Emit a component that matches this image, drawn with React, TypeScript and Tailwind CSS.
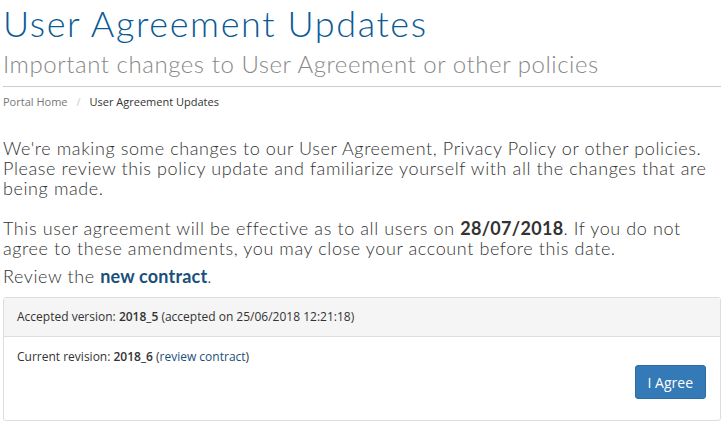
export default function App() {
  return (
    <div className="min-h-screen bg-white px-[3px] pr-[4px] font-['Lato',sans-serif] text-[#333]">
      {/* Page header */}
      <div className="border-b border-[#ccc] pb-[6px]">
        <h1 className="pt-[3px] text-[36px] font-light leading-[40px] tracking-[1.6px] text-[#0b5a94]">
          User Agreement Updates
        </h1>
        <h2 className="mt-[5px] text-[24px] font-light leading-[32px] tracking-[0.55px] text-[#888]">
          Important changes to User Agreement or other policies
        </h2>
      </div>

      {/* Breadcrumb */}
      <nav className="mt-[7px] flex items-center font-['Open_Sans',sans-serif] text-[11px] leading-[16px]">
        <span className="text-[#777]">Portal Home</span>
        <span className="px-[9px] text-[#ccc]">/</span>
        <span className="text-[#333]">User Agreement Updates</span>
      </nav>

      {/* Body text */}
      <div className="mt-[28px] text-[18px] font-light leading-[20px] tracking-[0.6px]">
        <p>
          We're making some changes to our User Agreement, Privacy Policy or other policies.
          Please review this policy update and familiarize yourself with all the changes that are
          being made.
        </p>
        <p className="mt-[20px]">
          This user agreement will be effective as to all users on{' '}
          <strong className="font-bold tracking-[0.3px]">28/07/2018</strong>. If you do not agree
          to these amendments, you may close your account before this date.
        </p>
        <p className="mt-[8px]">
          Review the <a className="font-bold tracking-[0.2px] text-[#1a4f7a]">new contract</a>.
        </p>
      </div>

      {/* Agreement panel */}
      <div className="mt-[11px] rounded-[3px] border border-[#ddd] font-['Open_Sans',sans-serif] text-[12px]">
        <div className="border-b border-[#ddd] bg-[#f5f5f5] px-[13px] py-[11px] leading-[16px]">
          Accepted version: <b className="font-semibold">2018_5</b> (accepted on 25/06/2018 12:21:18)
        </div>
        <div className="px-[13px] pt-[11px] pb-[21px] leading-[17px]">
          <div>
            Current revision: <b className="font-semibold">2018_6</b> (
            <a className="text-[#1a4f7a]">review contract</a>)
          </div>
          <div className="flex justify-end pr-[1px]">
            <button className="h-[34px] rounded-[3px] border border-[#2e6da4] bg-[#337ab7] px-[12px] text-[14px] text-white">
              I Agree
            </button>
          </div>
        </div>
      </div>
    </div>
  );
}
